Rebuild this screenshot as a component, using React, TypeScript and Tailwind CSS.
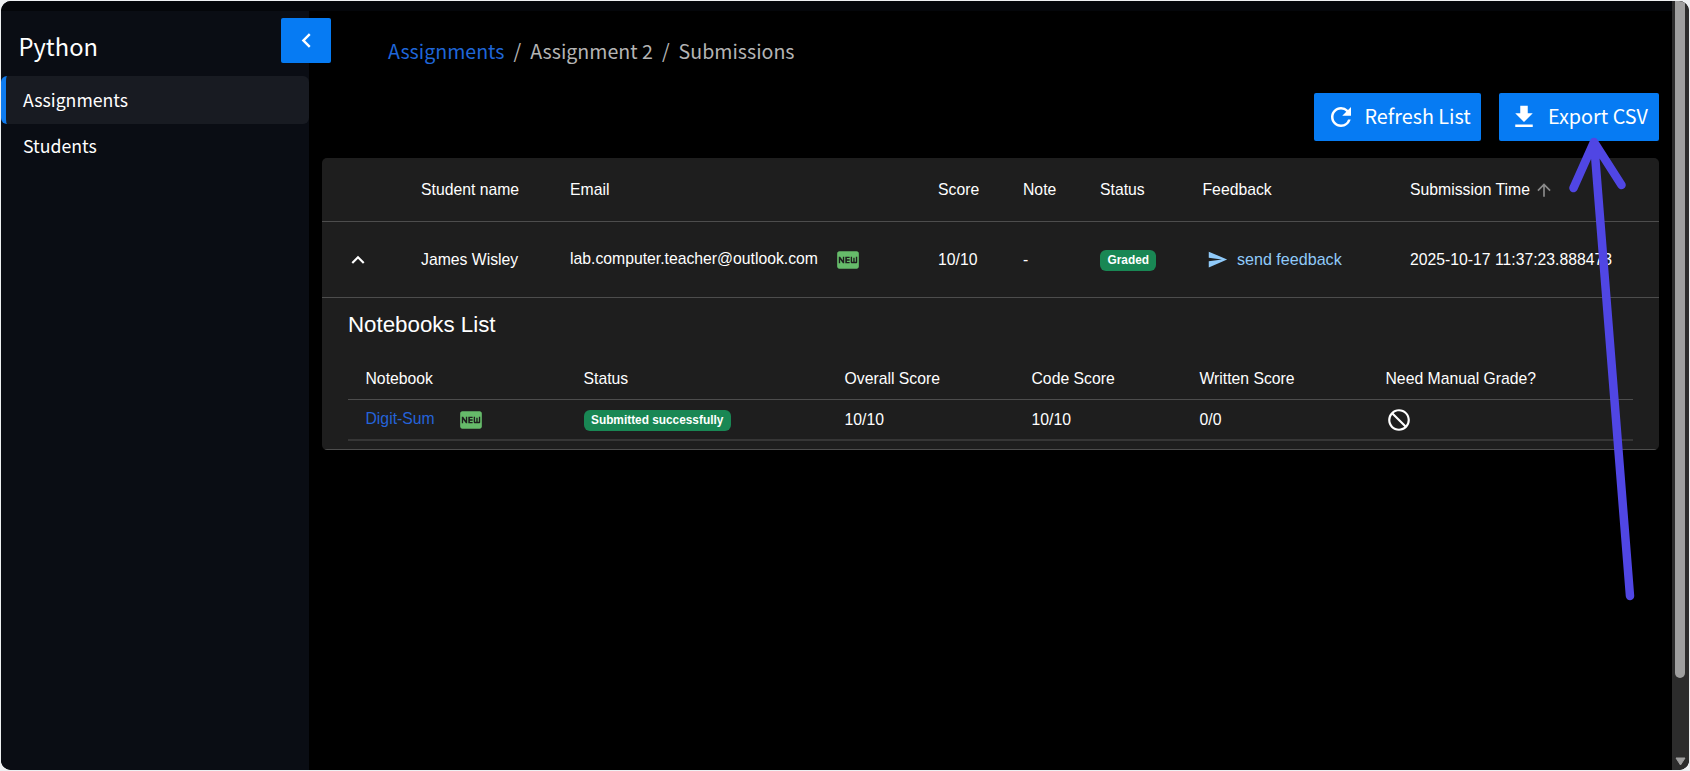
import { useState } from "react";
import {
  MdArrowUpward,
  MdBlock,
  MdDownload,
  MdFiberNew,
  MdKeyboardArrowLeft,
  MdKeyboardArrowUp,
  MdRefresh,
  MdSend,
} from "react-icons/md";

const NAV_ITEMS = ["Assignments", "Students"];

const SUBMISSIONS = [
  {
    name: "James Wisley",
    email: "lab.computer.teacher@outlook.com",
    score: "10/10",
    note: "-",
    status: "Graded",
    time: "2025-10-17 11:37:23.888473",
    notebooks: [
      {
        name: "Digit-Sum",
        status: "Submitted successfully",
        overall: "10/10",
        code: "10/10",
        written: "0/0",
      },
    ],
  },
];

const SUBMISSION_COLS =
  "grid grid-cols-[99px_149px_368px_85px_77px_102.5px_207.5px_1fr] items-center border-b border-[#4d4d4d]";
const NOTEBOOK_COLS =
  "grid grid-cols-[218px_261px_187px_168px_186px_1fr] items-center pl-[17.5px]";

function Badge({ children }: { children: React.ReactNode }) {
  return (
    <span className="inline-flex h-[21px] items-center rounded-md bg-[#198754] px-[7.5px] pt-px text-[11.85px]/[19px] font-bold">
      {children}
    </span>
  );
}

function Sidebar() {
  const [active, setActive] = useState("Assignments");

  return (
    <aside className="relative w-[308px] shrink-0 bg-[#0a0d14]">
      <h1 className="h-[65px] pt-[17px] pl-[17.5px] text-[23.7px] leading-[36px] text-white">Python</h1>
      <nav className="text-[17.7px]">
        {NAV_ITEMS.map((item) => (
          <a
            key={item}
            onClick={() => setActive(item)}
            className={
              item === active
                ? "flex h-12 items-center rounded-md border-l-[5px] border-[#0f7cf0] bg-[#181b22] pb-px pl-[17px] text-white"
                : "flex h-[46px] items-center pb-[3px] pl-[22px] text-white"
            }
          >
            {item}
          </a>
        ))}
      </nav>
      {/* collapse button hangs over the sidebar edge */}
      <button className="absolute top-[7px] left-[280px] z-10 flex h-[45px] w-[50px] items-center justify-center rounded-xs bg-[#067bf3] text-white">
        <MdKeyboardArrowLeft size={29} />
      </button>
    </aside>
  );
}

function Breadcrumb() {
  return (
    <nav className="flex h-[30px] items-center gap-[9px] pb-[2px] pl-[66px] text-[19.6px] text-[#b4b4b4]">
      <a className="text-[#1f66d8]">Assignments</a>
      <span>/</span>
      <span>Assignment 2</span>
      <span>/</span>
      <span>Submissions</span>
    </nav>
  );
}

function Toolbar() {
  return (
    <div className="mt-[26px] flex justify-end gap-[18px] text-[19.8px] text-white">
      <button className="flex h-[48px] w-[167px] items-center rounded-xs bg-[#067bf3] pl-[12px]">
        <MdRefresh size={30} className="mr-[9px]" />
        <span className="pb-[2px]">Refresh List</span>
      </button>
      <button className="flex h-[48px] w-[160px] items-center rounded-xs bg-[#067bf3] pl-[10.5px]">
        <MdDownload size={30} className="mr-[9px]" />
        <span className="pb-[2px]">Export CSV</span>
      </button>
    </div>
  );
}

function NotebooksList({ notebooks }: { notebooks: (typeof SUBMISSIONS)[0]["notebooks"] }) {
  return (
    <div className="h-[152px] border-b border-[#4d4d4d] px-[26px]">
      <h2 className="h-[60px] pt-[11px] text-[22.3px] leading-[32px]">Notebooks List</h2>
      <div className={`${NOTEBOOK_COLS} h-[42px] border-b border-[#4d4d4d]`}>
        <span>Notebook</span>
        <span>Status</span>
        <span>Overall Score</span>
        <span>Code Score</span>
        <span>Written Score</span>
        <span>Need Manual Grade?</span>
      </div>
      {notebooks.map((notebook) => (
        <div key={notebook.name} className={`${NOTEBOOK_COLS} h-[41px] border-b-2 border-[#363636]`}>
          <span className="flex items-center">
            <a className="pb-px text-[#2563d9]">{notebook.name}</a>
            <MdFiberNew size={26} className="ml-[23px] text-[#66bb6a]" />
          </span>
          <span className="flex pt-px">
            <Badge>{notebook.status}</Badge>
          </span>
          <span className="pt-px">{notebook.overall}</span>
          <span className="pt-px">{notebook.code}</span>
          <span className="pt-px">{notebook.written}</span>
          <MdBlock size={26} className="-scale-x-100" />
        </div>
      ))}
    </div>
  );
}

function SubmissionsTable() {
  return (
    <div className="mt-[17px] overflow-hidden rounded-[5px] bg-[#1e1e1e] font-['Liberation_Sans',Arial,sans-serif] text-[15.75px] text-white">
      <div className={`${SUBMISSION_COLS} h-16`}>
        <span />
        <span>Student name</span>
        <span>Email</span>
        <span>Score</span>
        <span>Note</span>
        <span>Status</span>
        <span>Feedback</span>
        <span className="flex items-center">
          Submission Time
          <MdArrowUpward size={20} className="ml-1 text-[#8a8a8a]" />
        </span>
      </div>
      {SUBMISSIONS.map((row) => (
        <div key={row.email}>
          <div className={`${SUBMISSION_COLS} h-[76px]`}>
            <MdKeyboardArrowUp size={26} className="ml-[23px]" />
            <span className="pt-px">{row.name}</span>
            <span className="flex items-center">
              <span className="pb-px">{row.email}</span>
              <MdFiberNew size={26} className="ml-[17px] text-[#66bb6a]" />
            </span>
            <span className="pt-px">{row.score}</span>
            <span className="pt-px">{row.note}</span>
            <span className="flex pt-px">
              <Badge>{row.status}</Badge>
            </span>
            <a className="flex items-center pl-[4.5px] text-[16.1px] text-[#90caf9]">
              <MdSend size={21} className="mr-[9px]" />
              <span className="pb-px">send feedback</span>
            </a>
            <span className="pt-px">{row.time}</span>
          </div>
          <NotebooksList notebooks={row.notebooks} />
        </div>
      ))}
    </div>
  );
}

function Scrollbar() {
  return (
    <div className="flex w-[17px] shrink-0 flex-col items-center justify-between bg-[#2c2c2c] pb-1">
      <div className="h-[677px] w-[10px] rounded-b-full bg-[#9f9f9f]" />
      <svg width="11" height="9" viewBox="0 0 11 9">
        <path d="M1 1h9L5.5 8z" fill="#9f9f9f" stroke="#9f9f9f" strokeLinejoin="round" />
      </svg>
    </div>
  );
}

export default function App() {
  return (
    <div className="relative h-[771px] w-[1690px] overflow-hidden bg-[#eef0f2] pt-px pr-[1.5px] pb-px pl-px font-['Noto_Sans_CJK_SC',sans-serif]">
      <div className="flex h-full overflow-hidden rounded-[10px] bg-black">
        <div className="flex min-w-0 flex-1 flex-col">
          <div className="h-[10px] shrink-0 bg-[#04060a]" />
          <div className="flex flex-1">
            <Sidebar />
            <main className="flex-1 pt-[26px] pr-[13px] pl-[13px]">
              <Breadcrumb />
              <Toolbar />
              <SubmissionsTable />
            </main>
          </div>
        </div>
        <Scrollbar />
      </div>

      {/* hand-drawn pointer to the export button */}
      <svg
        className="pointer-events-none absolute top-0 left-0"
        width="1690"
        height="771"
        fill="none"
        stroke="#5046e4"
        strokeWidth="8.5"
        strokeLinecap="round"
        strokeLinejoin="round"
      >
        <path d="M1630 596 1594 142M1573.5 188 1594 142 1621.5 185" />
      </svg>
    </div>
  );
}
